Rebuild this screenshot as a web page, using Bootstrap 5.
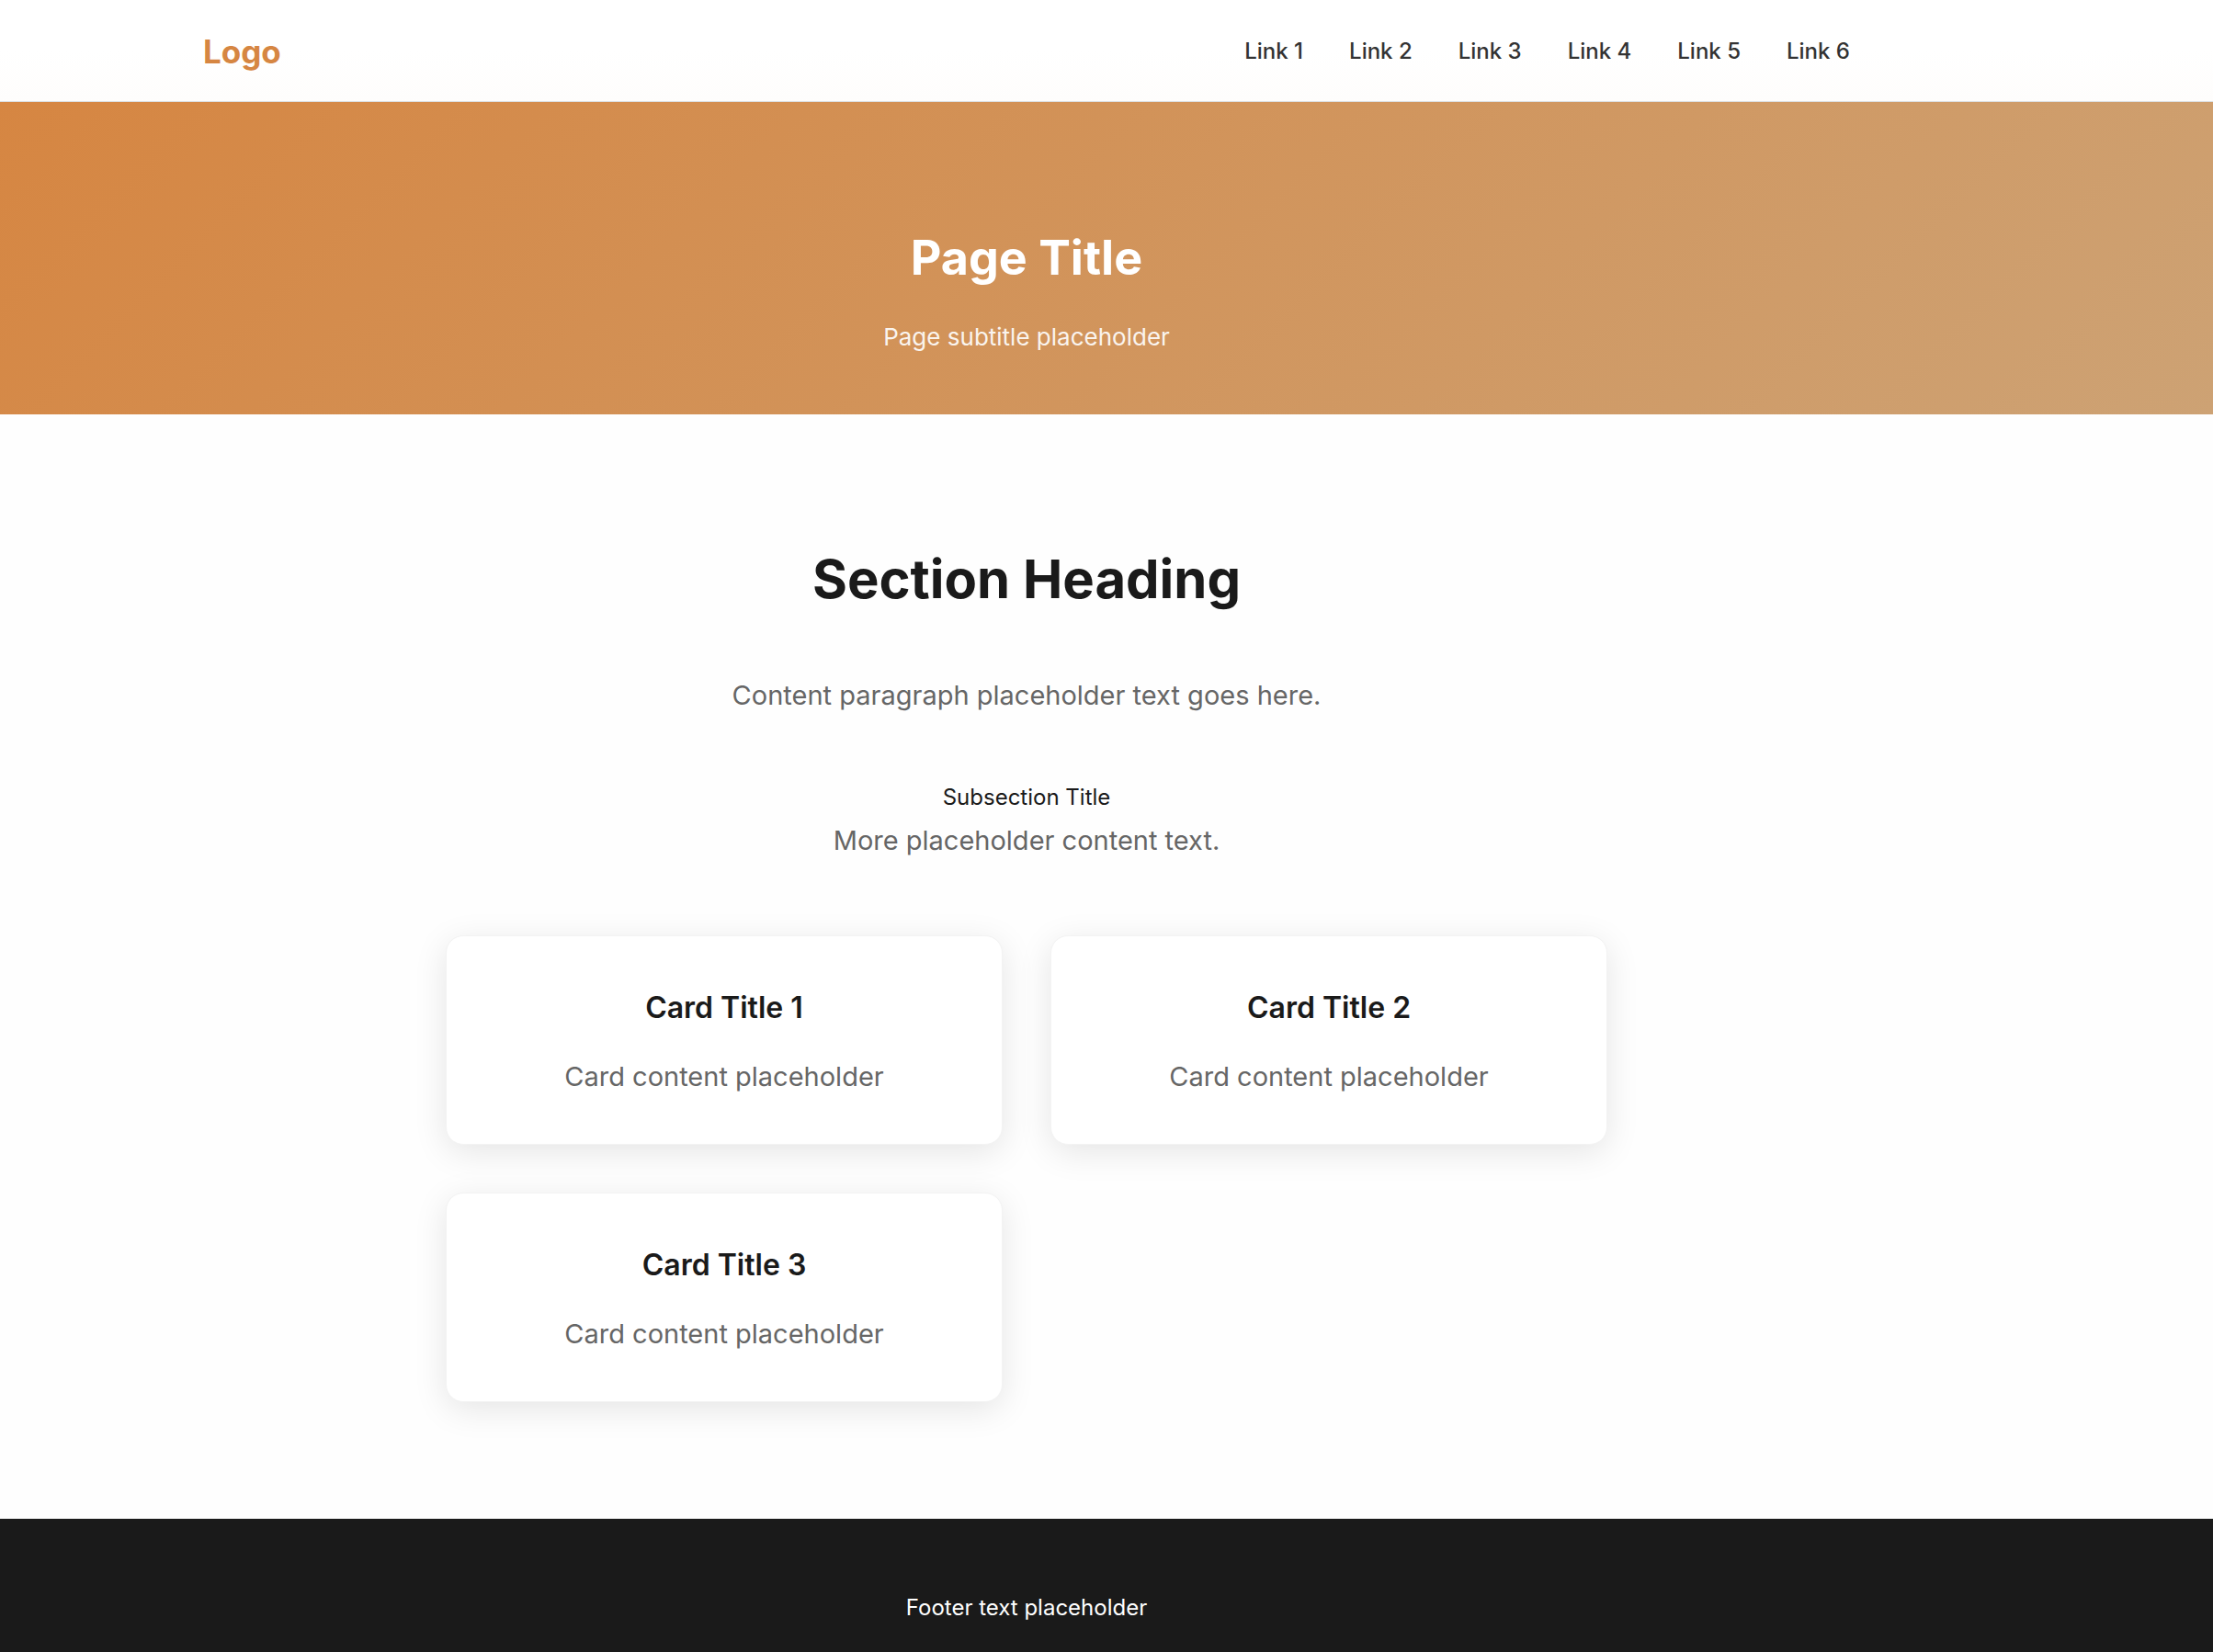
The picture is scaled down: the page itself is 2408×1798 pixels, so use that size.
<!DOCTYPE html>
<html lang="en">
<head>
<meta charset="utf-8">
<meta name="viewport" content="width=device-width, initial-scale=1">
<title>Page Title</title>
<link href="https://cdn.jsdelivr.net/npm/bootstrap@5.3.0/dist/css/bootstrap.min.css" rel="stylesheet">
<style>
  :root { --accent: #d68642; --accent-soft: #cda274; --ink: #1a1a1a; --muted: #666; --edge: 174px; }
  body { font-family: Inter, "Liberation Sans", sans-serif; font-size: 24px; line-height: 40px; color: var(--ink); background: #fefefe; }
  .band { padding-left: 24px; padding-right: 24px; }
  @media (min-width: 1800px) { .band { padding-left: 0; padding-right: var(--edge); } }
  .wide { max-width: 1792px; }
  .narrow { max-width: 1264px; }
  .topbar { border-bottom: 1px solid #dde0e2; background: linear-gradient(#fff 50%, #fefdfc); padding-top: 33px; padding-bottom: 31px; }
  .topbar .navbar-brand { color: var(--accent); font-size: 35px; line-height: 46px; font-weight: 700; padding: 0; margin: 0; }
  .topbar .nav { gap: 8px 50px; }
  .topbar .nav-link { color: #333; font-size: 24px; line-height: 40px; font-weight: 500; padding: 0; }
  .hero { background: linear-gradient(135deg, var(--accent), var(--accent-soft)); color: #fff; padding-top: 136px; padding-bottom: 62px; }
  .hero h1 { font-size: 52px; line-height: 68px; font-weight: 700; margin: 0 0 30px; }
  .hero p { font-size: 26px; line-height: 44px; opacity: .9; margin: 0; }
  .content { padding-top: 140px; padding-bottom: 127px; }
  .content h2 { font-size: 58px; line-height: 78px; font-weight: 700; margin: 0 0 63px; }
  .body-text { font-size: 29px; line-height: 50px; color: var(--muted); margin: 0; }
  .content h3 { font-size: 24px; line-height: 40px; font-weight: 400; margin: 66px 0 2px; }
  .tiles { --bs-gutter-x: 52px; --bs-gutter-y: 52px; margin-top: 26px; }
  .tile { --bs-card-border-color: #f3f3f3; --bs-card-border-radius: 19px; --bs-card-bg: #fff; box-shadow: 0 8px 36px rgba(0,0,0,.1); }
  .tile .card-body { padding: 52px 38px 48px; }
  .tile h4 { font-size: 32px; line-height: 52px; font-weight: 600; margin: 0 0 24px; }
  .footer { background: var(--ink); color: #fff; padding-top: 77px; padding-bottom: 77px; }
</style>
</head>
<body class="d-flex flex-column min-vh-100 overflow-x-hidden">
<header class="topbar navbar band">
  <div class="wide w-100 mx-auto d-flex flex-wrap align-items-center justify-content-between">
    <a class="navbar-brand" href="#">Logo</a>
    <nav aria-label="Main">
      <ul class="nav">
        <li><a class="nav-link" href="#">Link 1</a></li>
        <li><a class="nav-link" href="#">Link 2</a></li>
        <li><a class="nav-link" href="#">Link 3</a></li>
        <li><a class="nav-link" href="#">Link 4</a></li>
        <li><a class="nav-link" href="#">Link 5</a></li>
        <li><a class="nav-link" href="#">Link 6</a></li>
      </ul>
    </nav>
  </div>
</header>
<section class="hero band text-center">
  <h1>Page Title</h1>
  <p>Page subtitle placeholder</p>
</section>
<main class="content band text-center">
  <div class="narrow mx-auto">
    <h2>Section Heading</h2>
    <p class="body-text">Content paragraph placeholder text goes here.</p>
    <h3>Subsection Title</h3>
    <p class="body-text">More placeholder content text.</p>
    <div class="tiles row row-cols-1 row-cols-md-2">
      <div class="col"><article class="tile card h-100"><div class="card-body"><h4>Card Title 1</h4><p class="body-text">Card content placeholder</p></div></article></div>
      <div class="col"><article class="tile card h-100"><div class="card-body"><h4>Card Title 2</h4><p class="body-text">Card content placeholder</p></div></article></div>
      <div class="col"><article class="tile card h-100"><div class="card-body"><h4>Card Title 3</h4><p class="body-text">Card content placeholder</p></div></article></div>
    </div>
  </div>
</main>
<footer class="footer band text-center flex-grow-1">
  <p class="m-0">Footer text placeholder</p>
</footer>
<script src="https://cdn.jsdelivr.net/npm/bootstrap@5.3.0/dist/js/bootstrap.bundle.min.js"></script>
</body>
</html>
